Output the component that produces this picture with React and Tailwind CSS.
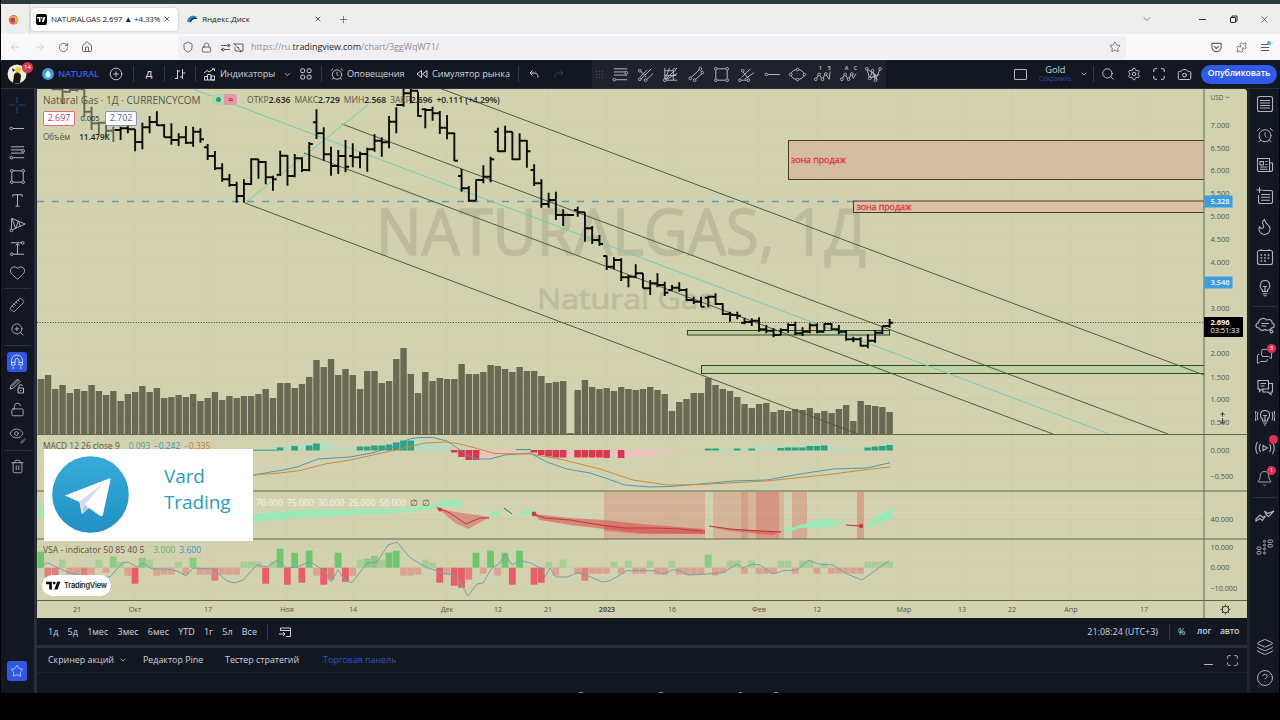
import React from 'react';
import {
  AlarmClock, ArrowLeft, ArrowRight, Bell, Brush, Camera, ChevronDown, CirclePlus, CircleHelp, Eye, Flame,
  Heart, House, Layers, Lightbulb, Lock, LockOpen, Maximize, MessageSquareText, MessagesSquare,
  Newspaper, Plus, RotateCw, Ruler, Search, Settings, Shield, Star, Trash2, X, ZoomIn, Puzzle,
} from 'lucide-react';

const FIRST_X = 40.8;
const STEP = 7.255;
const xAt = (i) => FIRST_X + STEP * i;

const volumes = [
  55, 59, 45, 49, 41, 45, 43, 49, 43, 39, 43, 33, 40, 42, 48, 42, 46, 36, 37, 39,
  37, 40, 33, 36, 42, 34, 38, 36, 38, 38, 40, 45, 36, 51, 51, 46, 50, 57, 74, 67,
  75, 59, 65, 59, 45, 63, 63, 51, 53, 75, 86, 60, 41, 62, 53, 56, 55, 55, 70, 60,
  60, 62, 69, 68, 65, 62, 67, 63, 63, 58, 51, 52, 53, 1, 44, 54, 47, 45, 46, 43,
  47, 45, 44, 45, 47, 44, 40, 23, 32, 35, 41, 41, 56, 49, 45, 43, 37, 30, 26, 30,
  31, 22, 24, 23, 25, 24, 26, 21, 23, 21, 25, 29, 13, 33, 29, 28, 27, 22,
];

// [index, high, low, close, open?] in thirds of a pixel, measured from y = 80
const bars = [
  [2, 20, 30, 28], [3, 20, 72, 35, 28], [4, 20, 38, 30], [5, 20, 35, 28], [6, 20, 110, 95], [7, 80, 150, 130], [8, 125, 162, 128], [9, 118, 170, 152],
  [10, 140, 186, 150], [11, 140, 180, 145], [12, 130, 160, 148], [13, 148, 214, 186], [14, 128, 208, 142], [15, 108, 160, 126],
  [16, 94, 138, 136], [17, 132, 172, 172], [18, 130, 194, 180], [19, 160, 198, 172], [20, 138, 192, 188], [21, 140, 200, 155],
  [22, 145, 188, 178], [23, 192, 240, 228, 202], [24, 213, 270, 265], [25, 250, 305, 298], [26, 282, 320, 315], [27, 305, 368, 348],
  [28, 298, 368, 312], [29, 235, 315, 238], [30, 237, 296, 246], [31, 243, 313, 292], [32, 287, 332, 298], [33, 212, 288, 227, 284],
  [34, 225, 317, 288], [35, 222, 292, 235], [36, 232, 276, 270], [37, 186, 274, 192], [38, 88, 177, 160, 127], [39, 142, 242, 223],
  [40, 200, 287, 258], [41, 210, 282, 228], [42, 180, 277, 260], [43, 190, 262, 232, 228], [44, 215, 265, 222], [45, 203, 275, 208],
  [46, 163, 215, 182], [47, 172, 230, 187], [48, 108, 205, 125], [49, 82, 160, 75], [50, 25, 80, 40], [51, 25, 70, 32],
  [52, 35, 110, 108], [53, 85, 145, 90, 88], [54, 80, 122, 100], [55, 93, 162, 143], [56, 105, 178, 160], [57, 158, 243, 242],
  [58, 267, 335, 325, 288], [59, 318, 366, 362], [60, 298, 362, 300], [61, 256, 310, 290], [62, 230, 307, 238], [63, 143, 215, 214, 155],
  [64, 137, 215, 155], [65, 155, 240, 238], [66, 160, 240, 182], [67, 180, 263, 214], [68, 253, 318, 310, 270], [69, 298, 383, 372],
  [70, 338, 383, 360], [71, 335, 420, 405], [72, 388, 438, 405], [73, 402, 408, 405], [74, 380, 410, 397, 390], [75, 397, 485, 445],
  [76, 438, 492, 480], [77, 465, 497, 492], [78, 527, 570, 560, 528], [79, 532, 568, 540], [80, 535, 603, 592], [81, 585, 622, 590],
  [82, 553, 595, 580], [83, 580, 625, 625], [84, 600, 645, 610], [85, 580, 622, 615], [86, 605, 648, 638], [87, 615, 632, 623, 630],
  [88, 607, 635, 630], [89, 625, 663, 660], [90, 650, 672, 665], [91, 650, 680, 680], [92, 647, 682, 650, 653], [93, 640, 675, 672],
  [94, 670, 705, 702], [95, 695, 725, 705], [96, 695, 718, 707], [97, 713, 733, 726, 728], [98, 715, 738, 722], [99, 712, 755, 748],
  [100, 735, 760, 752], [101, 745, 772, 765], [102, 745, 765, 750], [103, 730, 758, 735], [104, 725, 765, 760], [105, 742, 768, 755],
  [106, 730, 760, 736], [107, 730, 760, 755], [108, 730, 752, 732], [109, 730, 750, 748], [110, 735, 763, 755], [111, 750, 782, 778],
  [112, 770, 787, 778], [113, 772, 800, 797], [114, 763, 805, 782], [115, 750, 788, 758], [116, 737, 763, 738], [117, 717, 743, 728],
];

const macdUp = [
  [33, 3], [35, 4.5], [37, 5], [38, 7], [44, 4], [45, 4], [46, 5], [47, 5], [48, 6], [49, 8], [50, 10], [51, 10],
  [92, 2], [93, 2], [96, 2], [98, 2], [102, 2.5], [103, 3], [104, 3], [105, 3], [106, 4.5], [107, 4.5], [108, 5],
  [114, 3], [115, 4], [116, 4.5], [117, 5.5],
];
const macdDown = [
  [57, 2.5], [58, 7], [59, 10], [60, 10], [68, 2.5], [69, 5], [70, 6.5], [71, 7.5], [72, 7.5], [74, 7.5], [75, 7.5],
  [76, 7.5], [77, 7.5], [78, 8], [80, 8],
];

const vsa = {
  0: 16, 1: -10, 2: -10, 3: 8, 4: -7, 5: -7, 6: -9, 7: -7, 8: 8, 9: -5, 10: 11, 11: 6, 12: -8, 13: -16, 14: 10, 15: 8, 16: -8,
  17: -7, 18: -7, 19: 6, 20: -7, 21: 10, 22: -7, 23: -7, 24: -13, 25: -7, 26: -7, 27: -7, 28: 6, 29: 6, 30: 6, 31: -16, 32: 6, 33: 19,
  34: -17, 35: 15, 36: -15, 37: 17, 38: -8, 39: -17, 40: -12, 41: 15, 42: -14, 43: -8, 44: 8, 45: 9, 46: 12, 47: 8, 48: 15, 49: 17,
  50: -8, 51: -8, 52: -7, 53: 8, 54: 5, 55: -15, 56: -7, 57: -18, 58: -20, 59: -12, 60: 15, 61: -6, 62: 17, 63: -8, 64: 15, 65: -17,
  66: 17, 68: -17, 69: -15, 70: 6, 71: -8, 72: 8, 74: -6, 75: -13, 76: -6, 77: -6, 78: -6, 79: 6, 80: -6, 81: 7, 82: -6, 83: -6,
  84: 7, 85: -7, 86: -7, 87: 7, 88: -7, 89: -7, 90: -7, 91: -7, 92: 13, 93: -8, 94: -5, 95: 7, 96: 7, 97: -6, 98: 7, 99: -6, 100: -6,
  101: -6, 102: 7, 103: 7, 104: -6, 105: 7, 106: 7, 107: -6, 108: 5, 109: -6, 110: -6, 111: -6, 112: -6, 113: -6, 114: 6, 115: 6, 116: 6, 117: 6,
};

const vsaOpacity = (v) => (Math.abs(v) >= 14 ? 0.85 : Math.abs(v) >= 9 ? 0.6 : 0.35);

const priceLabels = [
  ['7.000', 124.7], ['6.500', 147.8], ['6.000', 170.5], ['5.500', 193.5], ['5.000', 216], ['4.500', 239.3], ['4.000', 262],
  ['3.000', 308], ['2.000', 353.5], ['1.500', 376.8], ['1.000', 399.5], ['0.500', 422],
  ['0.000', 450], ['−0.500', 476], ['40.000', 519.3], ['10.000', 546.7], ['0.000', 567.4], ['−10.000', 588.6],
];
const timeLabels = [
  ['21', 77], ['Окт', 135], ['17', 208], ['Ноя', 287], ['14', 353], ['Дек', 447], ['12', 498], ['21', 548], ['2023', 607],
  ['16', 672], ['Фев', 759], ['12', 817], ['Мар', 904], ['13', 962], ['22', 1012], ['Апр', 1071], ['17', 1144],
];

function Bars() {
  let prev = null;
  const d = bars.map(([i, h, l, c, o]) => {
    const x = xAt(i);
    const open = o ?? prev ?? c;
    prev = c;
    const y = (v) => (80 + v / 3).toFixed(1);
    return `M${x} ${y(h)}V${y(l)}M${x - 3.6} ${y(open)}H${x}M${x} ${y(c)}H${x + 3.6}`;
  }).join('');
  return <path d={d} stroke="#0b0b08" strokeWidth="1.9" fill="none" />;
}

function Chart() {
  return (
    <svg viewBox="37 89 1210 529" className="block h-[529px] w-[1210px]" fontFamily='"Open Sans", "Noto Sans", sans-serif'>
      <defs>
        <clipPath id="main"><rect x="37" y="89" width="1167" height="345" /></clipPath>
      </defs>
      <rect x="37" y="89" width="1210" height="529" fill="#d3d2b0" />
      <g stroke="#cbcaa8" strokeWidth="1" opacity=".4">
        {timeLabels.map(([, x]) => <path key={x} d={`M${x} 89V600`} />)}
        {priceLabels.map(([, y]) => <path key={y} d={`M37 ${y}H1204`} />)}
      </g>

      <g fill="#8c8b74" stroke="#8c8b74" opacity=".3">
        <text x="376" y="255" fontSize="64" strokeWidth="1.6" textLength="490" lengthAdjust="spacingAndGlyphs">NATURALGAS, 1Д</text>
        <text x="537" y="309" fontSize="27" strokeWidth=".8" textLength="177" lengthAdjust="spacingAndGlyphs">Natural Gas</text>
      </g>

      {volumes.map((h, i) => (
        <rect key={i} x={Math.max(37, xAt(i) - 3.2)} y={434 - h} width={i ? 6.4 : 6.9} height={h} fill="#6a6953" />
      ))}

      <g clipPath="url(#main)">
        <rect x="788.5" y="140.5" width="420" height="39" fill="#d4bda2" stroke="#4a3a2c" />
        <rect x="853.5" y="201" width="360" height="11.5" fill="#d8c1a8" stroke="#4a3a2c" />
        <rect x="687.5" y="330.5" width="202" height="4.5" fill="#b9cf9f" stroke="#2f4526" />
        <rect x="701.5" y="365.5" width="510" height="8" fill="#c0d3a6" stroke="#2f4526" />
        <path d="M37 201.5H853" stroke="#5b9cba" strokeWidth="1.6" strokeDasharray="7 8" />
        <path d="M37 322.5H1204" stroke="#3b3b30" strokeDasharray="1 1.6" />
        <g stroke="#4a5c40" fill="none">
          <path d="M440 88.3L1204 375" />
          <path d="M342 124L1168 434" />
          <path d="M304 153L1053 434" />
          <path d="M245 203L858 434" />
        </g>
        <g stroke="#6fcdb0" fill="none">
          <path d="M193 89L1109 434" />
          <path d="M245 203L368 105" />
        </g>
        <Bars />
      </g>
      <g fill="#dd3c40" fontSize="9" stroke="#dd3c40" strokeWidth=".3">
        <text x="791" y="163" textLength="55">зона продаж</text>
        <text x="856.5" y="209.5" textLength="55">зона продаж</text>
      </g>

      {/* MACD */}
      <path d="M253 450L283 447L320 442L345 448L360 449L393 444L412 440L452 447V450Z" fill="#a9e0c8" opacity=".75" />
      <path d="M452 450L467 459L490 459L505 453L535 451V449Z" fill="#f0c0c0" opacity=".8" />
      <path d="M545 450H690L626 458L580 458L550 455Z" fill="#f3bfc6" opacity=".85" />
      <path d="M690 450L760 447L820 444L850 449L893 444V450Z" fill="#a9e0c8" opacity=".7" />
      {macdUp.map(([i, h]) => <rect key={i} x={xAt(i) - 3.4} y={450.5 - h} width="6.6" height={h} fill="#2fa283" />)}
      {macdDown.map(([i, h]) => <rect key={i} x={xAt(i) - 3.4} y="450" width="6.6" height={h} fill="#d8384f" />)}
      <path d="M253 450.2H277M516 449.6H531" stroke="#2fa283" />
      <polyline fill="none" stroke="#4f97b5" points="240,478 253,475 283,470 297,467 318,459 350,457 373,452.7 393,446.7 410,438.7 420,437.5 433,437.5 447,441 467,455 477,459 490,459 505,455 530,453 547,462 567,469 590,473 605,478 625,485 650,487 670,486.5 700,484 733,481 767,480 800,474 833,469 867,468 890,462.7" />
      <polyline fill="none" stroke="#cb8a3e" points="240,477 253,475 280,473 300,470.5 325,464 350,460 400,449 425,443 447,442 460,444 475,448 495,453.5 530,454 560,459 600,469 633,480 667,485 700,484.5 767,481 800,477.5 833,474 867,469.5 890,467" />

      {/* RSI */}
      <path d="M37 502.5H1204M37 513H1204" stroke="#dcdcbf" opacity=".7" />
      <g fill="#d66a5c">
        <rect x="604" y="492" width="101" height="47" opacity=".3" />
        <rect x="713" y="492" width="71" height="47" opacity=".28" />
        <rect x="741" y="492" width="7" height="47" opacity=".3" />
        <rect x="756" y="492" width="23" height="47" opacity=".4" />
        <rect x="792" y="492" width="15" height="47" opacity=".35" />
        <rect x="857" y="492" width="7" height="47" opacity=".45" />
      </g>
      <path d="M253 514L300 510L400 509L440 504L438 508L400 513L300 518L253 522Z" fill="#9ce8b6" />
      <path d="M37 500L45 505V520L37 515Z" fill="#a8e3b2" />
      <path d="M435 506L450 511L490 517L468 529L455 523Z" fill="#d96a60" opacity=".6" />
      <path d="M533 514L570 518L604 520L640 524L705 529V534L640 533L570 525L540 520Z" fill="#d9504d" opacity=".6" />
      <path d="M604 526L640 529L705 531V534L640 534L604 531Z" fill="#d9504d" opacity=".45" />
      <path d="M710 527L750 530L782 531L773 535L730 531Z" fill="#d9504d" opacity=".55" />
      <path d="M437 508L450 513L466 524L480 518L489 518M533 514L545 518L570 520L600 525L625 528L655 528L680 529L703 531M709 526L730 529L760 531L781 532M846 525L861 526" stroke="#b9363b" fill="none" />
      <path d="M504 508L512 514" stroke="#4d5a3e" />
      <circle cx="440" cy="509.5" r="2" fill="#cc3b3f" />
      <circle cx="534" cy="514" r="2.4" fill="#cc3b3f" />
      <circle cx="861" cy="526" r="2.2" fill="#cc3b3f" />
      <path d="M784 530L800 525L825 519L846 523L825 527L800 528L786 533ZM866 527L878 516L893 508L891 519L878 523L866 528ZM492 511L500 510L498 517L492 517ZM517 513L531 509V515ZM437 501L462 500V506L440 506Z" fill="#93ecb9" />

      {/* VSA */}
      {Object.entries(vsa).map(([i, v]) => (
        <rect
          key={i}
          x={xAt(Number(i)) - 3.5}
          y={v > 0 ? 567.7 - v : 567.7}
          width="6.8"
          height={Math.abs(v)}
          fill={v > 0 ? '#5cc463' : '#ea4a5c'}
          opacity={vsaOpacity(v)}
        />
      ))}
      <polyline fill="none" stroke="#72a3a8" points="38,568 43,565 48,562.7 56,567 70,573 90,577 110,577 122,563 128,562 137,567 143,563 152,569 167,569 177,571 186,576 193,568 213,569 227,581 235,583 243,580 257,565 267,567 277,560 287,568 297,567 307,563 312,562.7 325,571.7 331,582 338,570 345,580.7 352,582.7 367,563 377,562 388,545 397,542 410,557.7 427,567.7 447,574 457,576.7 468,596 477,584 483,583 492,568 499,564 505,554 512,565 520,560.7 530,562.7 542,569 545,576.7 550,568 556,577 567,577 578,572.7 590,576.7 602,582 610,580.7 617,576.7 627,570.7 655,570.7 663,574 672,570 678,570 688,575 700,574.5 723,572.7 737,564 743,568 753,564 760,565 773,574 783,570.7 797,570 809,560 818,564 833,565 847,574 862,580 889,560.7" />

      {/* pane borders and scales */}
      <path d="M37 434.5H1247M37 491H1247M37 539H1247M37 600.5H1247M1204 89V618" stroke="#63624d" fill="none" />
      <g fill="#55543f" fontSize="7.8">
        <text x="1210.5" y="100" textLength="13" lengthAdjust="spacingAndGlyphs">USD</text>
        {priceLabels.map(([t, y]) => (
          <text key={y} x={1210.5} y={y + 2.8} textLength={t.length * 3.8} lengthAdjust="spacingAndGlyphs">{t}</text>
        ))}
        {timeLabels.map(([t, x]) => (
          <text key={x} x={x} y="612" textAnchor="middle" fontSize="7.2" fontWeight={t === '2023' ? 700 : 400}>{t}</text>
        ))}
      </g>
      <path d="M1226 96.5l1.6 1.6 1.6-1.6" stroke="#5d5c4a" fill="none" />
      <rect x="1204.5" y="195.500" width="28" height="12" fill="#3a9de0" />
      <rect x="1204.5" y="276.500" width="28" height="12" fill="#3a9de0" />
      <rect x="1204" y="317" width="39" height="20" fill="#020202" />
      <g fill="#f3f7fa" fontSize="7.600" fontWeight="600">
        <text x="1210.5" y="204.300" textLength="19">5.328</text>
        <text x="1210.5" y="285.300" textLength="19">3.546</text>
        <text x="1210.5" y="325" textLength="19" fontWeight="700">2.696</text>
        <text x="1210.5" y="333.400" textLength="29" fontWeight="400">03:51:33</text>
      </g>
      <g stroke="#33322a" fill="none">
        <circle cx="1225.5" cy="609.5" r="3.3" />
        <path d="M1225.5 604.6v1.6M1225.5 612.8v1.6M1220.6 609.5h1.6M1228.8 609.5h1.6M1222 606l1 1M1229 606l-1 1M1222 613l1-1M1229 613l-1-1" />
        <path d="M1222.5 413v10M1220.5 415l2-2.5 2 2.5M1220.5 421.5l2 2.5 2-2.5" strokeWidth=".9" />
        <path d="M1221 417.5h3.5" stroke="#fff" />
      </g>
    </svg>
  );
}

/* drawing tools, 20x20 grid, nodes are the little round handles */
const tools = {
  trend: { d: 'M5 10H17', n: [[3.5, 10]] },
  fib: { d: 'M3 4H17M3 7.3H15M3 10.6H17M5 15.5H17', n: [[16, 8.2], [3.5, 15.5]] },
  rect: { d: 'M5.5 4H14.5M5.5 16H14.5M4 5.5V14.5M16 5.5V14.5', n: [[4, 4], [16, 4], [4, 16], [16, 16]] },
  text: { d: 'M5 6V4H15V6M10 4V16M8 16H12' },
  pattern: { d: 'M3.500 16L4 3.500L18 9.500L3.500 16M4 3.500L8 14L11 6.500L13 12', n: [[3.5, 16.200]] },
  forecast: { d: 'M3 4H15M5 16H17M10 5V16M8 7l2-2 2 2', n: [[15.5, 4], [4, 16]] },
  pitchfork: { d: 'M4.500 12.500L12 5M5 15L9 11L16 4M11 15.500L18 9M5 6.500L11 13', n: [[4, 6], [4, 15], [10, 16]] },
  gann: { d: 'M4 3V16H17M4 16L17 3M4 16L9 3M4 16L17 9M4 6H13V16M4 11H16', n: [[4, 16], [14, 5]] },
  channel: { d: 'M4.5 13L13 5M9 15L16 9', n: [[3.5, 14], [14, 4], [8, 16], [16, 8]] },
  schiff: { d: 'M5 13L14 4M8 15L18 8M3 16H13M6 7L12 14', n: [[6, 6], [3, 16], [12, 16]] },
  ray: { d: 'M5 10H18', n: [[3.5, 10]] },
  ellipse: { d: 'M3 10C4 3 16 3 17 10C16 17 4 17 3 10', n: [[2.8, 10], [17.2, 10], [10, 4.7], [10, 15.3]] },
  wave5: { d: 'M3 15L6 10L10 15L13 9L17 15L18 7', n: [[3, 15], [6.5, 10], [10, 15], [13.5, 9.5]], label: ['1', '5'] },
  waveC: { d: 'M3 15L6 10L10 15L13 9L15 14L18 9', n: [[3, 15], [6.5, 10], [10, 15], [13.5, 9.5]], label: ['A', 'C'] },
  heads: { d: 'M3 4L6 14L9 6L12 16L17 4M3 4L13 11L6 14L16 10M9 6L14 16', n: [[3, 4], [6, 14], [12, 16], [17, 4], [9, 6]] },
};

function Tool({ name, size = 19 }) {
  const { d, n = [], label } = tools[name];
  return (
    <svg viewBox="0 0 20 20" width={size} height={size} fill="none" stroke="currentColor" strokeWidth="1.05">
      <path d={d} />
      {n.map(([x, y], k) => <circle key={k} cx={x} cy={y} r="1.4" fill="#131722" />)}
      {label && (
        <g fontSize="5.5" fill="currentColor" stroke="none" fontFamily="Open Sans, sans-serif" fontWeight="700">
          <text x="6" y="5">{label[0]}</text>
          <text x="15.500" y="5">{label[1]}</text>
        </g>
      )}
    </svg>
  );
}

const Sep = ({ className = '' }) => <div className={`h-4 w-px shrink-0 bg-[#363a45] ${className}`} />;

function BrowserChrome() {
  return (
    <>
      <div className="h-1 bg-[#2d3c41]" />
      <div className="flex h-[30px] items-center bg-[#eeeeee] text-[8px] text-[#1b1b20]">
        <div className="flex h-full w-[29px] items-center justify-center border-r border-[#d3d3d6] pr-1">
          <svg width="11" height="11" viewBox="0 0 12 12">
            <circle cx="6" cy="6.3" r="5.2" fill="#f0643c" />
            <path d="M1 5C2 2 4 1 5 2C7 3 9 1 10 3C12 6 11 10 7 11.3C9 8 7 5 1 5Z" fill="#f5a83c" />
            <circle cx="5.2" cy="6.6" r="2.4" fill="#8b3fa8" />
          </svg>
        </div>
        <div className="ml-px flex h-[23px] w-[147px] items-center rounded-sm bg-white shadow-[0_0_2px_#a5a5ad]">
          <div className="ml-[5px] flex h-[11px] w-[11px] items-center justify-center rounded-[2px] bg-black">
            <svg width="9" height="7" viewBox="0 0 18 12" fill="#fff"><path d="M0 1H7V11H4V4H0Z" /><circle cx="9.6" cy="2.6" r="1.7" /><path d="M13 1H17L13.5 11H9.5Z" /></svg>
          </div>
          <span className="ml-[4px] w-[112px] whitespace-nowrap tracking-[-0.12px]">NATURALGAS 2.697 ▲ +4.33% <span className="text-[#c5c5c8]">C</span></span>
          <X size={8} strokeWidth={2} />
        </div>
        <svg className="ml-[9px]" width="11" height="11" viewBox="0 0 12 12"><path d="M.500 8.500C0 3 6 0 11.500 3C7 3 5 6 4 9Z" fill="#2787cf" /><path d="M3 8C5 4 8 2.500 11.500 4.500L10 5.500C7 5 6 6 4 9Z" fill="#18304f" /></svg>
        <span className="ml-[4px] w-[112px]">Яндекс.Диск</span>
        <X size={8} strokeWidth={2} />
        <Plus size={11} strokeWidth={1.6} className="ml-[16px] text-[#55555c]" />
        <ChevronDown size={12} strokeWidth={1.6} className="ml-auto mr-[46px] text-[#55555c]" />
        <div className="mr-[23px] h-px w-[7px] bg-[#333]" />
        <svg width="9" height="9" viewBox="0 0 9 9" fill="none" stroke="#222"><rect x="1.5" y="2.5" width="5" height="5" rx=".5" /><path d="M3 2.3V1H8V6H6.7" /></svg>
        <X size={11} strokeWidth={1.5} className="ml-[21px] mr-[10px] text-[#333]" />
      </div>
      <div className="flex h-[26px] items-center bg-[#f9f9fb] text-[#5b5b66]">
        <ArrowLeft size={12} strokeWidth={1.6} className="ml-[8px] text-[#c4c4c9]" />
        <ArrowRight size={12} strokeWidth={1.6} className="ml-[13px] text-[#c4c4c9]" />
        <RotateCw size={11} strokeWidth={1.9} className="ml-[12px]" />
        <House size={12} strokeWidth={1.9} className="ml-[12px]" />
        <div className="ml-[85px] flex h-[23px] w-[948px] items-center rounded-sm bg-[#f0f0f4]">
          <Shield size={12} strokeWidth={1.8} className="ml-[4px]" />
          <Lock size={11} strokeWidth={1.9} className="ml-[7px]" />
          <svg className="ml-[8px]" width="24" height="11" viewBox="0 0 24 11" fill="none" stroke="currentColor">
            <path d="M1 3.5H7M4 7.5H10M3 7.5H1M8 3.5H10" /><circle cx="8.5" cy="3.5" r="1.3" /><circle cx="3" cy="7.5" r="1.3" />
            <path d="M14 2H23V9H21V10L18.5 9H15V5M13.5 1L22 10M17 5.5H19" />
          </svg>
          <span className="ml-[7px] text-[9px] tracking-[-0.06px] text-[#8f8f9a]">https://ru.<span className="text-[#1f1f25]">tradingview.com</span>/chart/3ggWqW71/</span>
          <Star size={12} strokeWidth={1.7} className="ml-auto mr-[5px]" />
        </div>
        <svg className="ml-auto" width="11" height="11" viewBox="0 0 12 12" fill="none" stroke="currentColor" strokeWidth="1.2"><path d="M1 1.5H11V5.5A5 5 0 0 1 1 5.500ZM3.5 4.5L6 7L8.5 4.5" /></svg>
        <Puzzle size={11} strokeWidth={1.9} className="ml-[14px]" />
        <div className="relative ml-[14px] mr-[11px] flex w-[8px] flex-col gap-0.5">
          <i className="h-px w-full bg-[#5b5b66]" /><i className="h-px w-full bg-[#5b5b66]" /><i className="h-px w-full bg-[#5b5b66]" />
          <b className="absolute -top-[3px] left-[6px] h-1 w-1 rounded-full bg-[#3cc7a0]" />
        </div>
      </div>
    </>
  );
}

const favourites = ['fib', 'pitchfork', 'gann', 'channel', 'rect', 'schiff', 'ray', 'ellipse', 'wave5', 'waveC', 'heads'];

function TopBar() {
  return (
    <div className="flex h-[28px] items-center whitespace-nowrap bg-[#131722] text-[9.1px] font-medium text-[#d1d4dc]">
      <div className="relative flex w-[32px] shrink-0 justify-center">
        <svg width="20" height="20" viewBox="0 0 20 20"><circle cx="10" cy="10" r="9.5" fill="#f2efd6" /><circle cx="11" cy="6" r="3" fill="#e3d54c" /><path d="M6 19L7 11C8 7 14 8 14 12L13 19ZM5 4L8 6L6 8Z" fill="#16160f" /></svg>
        <span className="absolute -top-[2px] right-0 flex h-[11px] w-[11px] items-center justify-center rounded-full bg-[#d8334f] text-[6px] text-white">14</span>
      </div>
      <div className="ml-[5px] flex w-5 justify-center">
        <svg width="12" height="12" viewBox="0 0 12 12"><circle cx="6" cy="6" r="6" fill="#3f9fd8" /><path d="M6 2.2C8 4.8 8.6 5.8 8.6 7A2.6 2.6 0 0 1 3.4 7C3.4 5.8 4 4.8 6 2.2Z" fill="#e6f4fb" /></svg>
      </div>
      <span className="w-[41px] text-[9.2px] font-semibold tracking-[-0.2px] text-[#2f5fe6]">NATURAL</span>
      <div className="flex w-[34px] justify-center"><CirclePlus size={14} strokeWidth={1.5} /></div>
      <Sep />
      <span className="w-[30px] text-center font-semibold">Д</span>
      <Sep />
      <div className="flex w-[30px] justify-center">
        <svg width="12" height="12" viewBox="0 0 12 12" fill="none" stroke="currentColor"><path d="M3.5 2V11M1 10.5H3.5M3.5 3H6M8.5 1V11M8.5 5H11.5M6 9H8.5" /></svg>
      </div>
      <Sep />
      <div className="ml-[3px] flex w-[21px] justify-center">
        <svg width="13" height="13" viewBox="0 0 13 13" fill="none" stroke="currentColor"><path d="M1 5L4 2.5L6 4L11 .8M9 .8H11.5V3M1.5 12V8.5H4.5V12M4.5 12V6.5H8V12M8 12V8H11.5V12ZM1 12H12" /></svg>
      </div>
      <span className="w-[57px] tracking-[-0.05px]">Индикаторы</span>
      <div className="flex w-5 justify-center"><ChevronDown size={9} strokeWidth={2} /></div>
      <div className="flex w-[18px] justify-center">
        <svg width="12" height="12" viewBox="0 0 12 12" fill="none" stroke="currentColor"><rect x=".8" y=".8" width="3.8" height="3.8" rx="1" /><rect x="7.2" y=".8" width="3.8" height="3.8" rx="1" /><rect x=".8" y="7.2" width="3.8" height="3.8" rx="1" /><rect x="7.2" y="7.2" width="3.8" height="3.8" rx="1" /></svg>
      </div>
      <Sep className="ml-[6px]" />
      <div className="ml-[5px] flex w-5 justify-center"><AlarmClock size={14} strokeWidth={1.5} /></div>
      <span className="w-[57px] tracking-[-0.1px]">Оповещения</span>
      <div className="ml-2 flex w-5 justify-center">
        <svg width="12" height="10" viewBox="0 0 12 10" fill="none" stroke="currentColor"><path d="M5.5 1.5V8.5L1 5ZM11 1.5V8.5L6.5 5Z" /></svg>
      </div>
      <span className="w-[77px] tracking-[-0.05px]">Симулятор рынка</span>
      <Sep className="ml-[9px]" />
      <div className="flex w-[30px] justify-center"><svg width="10" height="8" viewBox="0 0 10 8" fill="none" stroke="currentColor"><path d="M3.5 .5L1 3L3.5 5.5M1 3H6C8 3 9 4.5 9 7.5" /></svg></div>
      <div className="flex w-5 justify-center text-[#3a3e49]"><svg width="10" height="8" viewBox="0 0 10 8" fill="none" stroke="currentColor"><path d="M6.5 .5L9 3L6.5 5.500M9 3H4C2 3 1 4.5 1 7.5" /></svg></div>
      <div className="ml-[23px] flex h-full w-[294px] items-center bg-[#1e222d] text-[#b2b5be]">
        <div className="grid w-4 grid-cols-3 gap-[2px] px-1">
          {[...Array(9)].map((_, k) => <i key={k} className="h-px w-px bg-[#50535e]" />)}
        </div>
        {favourites.map((name) => (
          <div key={name} className="flex w-[25.3px] shrink-0 justify-center"><Tool name={name} size={19} /></div>
        ))}
      </div>
      <div className="ml-auto flex w-5 justify-center"><div className="h-[11px] w-[13px] rounded-[1px] border border-[#b2b5be]" /></div>
      <div className="ml-[5px] flex w-[39px] flex-col items-center">
        <span className="text-[9.2px] leading-[10px]">Gold</span>
        <span className="text-[6.2px] leading-[8px] text-[#2a4cb0]">Сохранить</span>
      </div>
      <div className="ml-[2px] flex w-[14px] justify-center"><ChevronDown size={8} strokeWidth={2} /></div>
      <Sep className="ml-[2px] mr-[2px]" />
      <div className="flex w-[25.3px] justify-center"><Search size={14} strokeWidth={1.5} /></div>
      <div className="flex w-[25.3px] justify-center"><Settings size={14} strokeWidth={1.5} /></div>
      <div className="flex w-[25.3px] justify-center"><Maximize size={14} strokeWidth={1.7} /></div>
      <div className="flex w-[25.3px] justify-center"><Camera size={15} strokeWidth={1.5} /></div>
      <button className="ml-1 mr-[3px] h-[19px] w-[76px] rounded-full bg-[#2f5be8] text-[8.7px] font-semibold tracking-[-0.1px] text-white">Опубликовать</button>
    </div>
  );
}

const Slot = ({ children }) => <div className="flex h-6 items-center justify-center">{children}</div>;
const Rule = () => <div className="flex h-[8.7px] items-center"><div className="mx-auto h-px w-[27px] bg-[#2e323d]" /></div>;

function LeftBar() {
  return (
    <div className="flex w-[36px] shrink-0 flex-col border-r-[3px] border-[#2a2e39] bg-[#131722] pb-[7px] pr-[1px] pt-[3.500px] text-[#b2b5be]">
      <Slot>
        <svg width="16" height="16" viewBox="0 0 16 16" stroke="#243f8f" strokeWidth="1.1"><path d="M8 0V6.5M8 9.5V16M0 8H6.5M9.5 8H16" /></svg>
      </Slot>
      {['trend', 'fib', 'rect', 'text', 'pattern', 'forecast'].map((name) => <Slot key={name}><Tool name={name} /></Slot>)}
      <Slot><Heart size={17} strokeWidth={1.3} /></Slot>
      <Rule />
      <Slot><Ruler size={16} strokeWidth={1.3} className="-scale-x-100" /></Slot>
      <Slot><ZoomIn size={15} strokeWidth={1.4} /></Slot>
      <Rule />
      <Slot>
        <div className="flex h-5 w-5 items-center justify-center rounded-[3px] bg-[#3058e0]">
          <svg width="14" height="16" viewBox="0 0 14 16" fill="none" stroke="#c9d6fb"><path d="M1.5 11V6.5A5.5 5.5 0 0 1 12.5 6.5V11H9V6.5A2 2 0 0 0 5 6.5V11ZM1.5 8.5H5M9 8.5H12.5M3.2 12.5V15M10.8 12.5V15" /></svg>
        </div>
      </Slot>
      <Slot>
        <svg width="16" height="16" viewBox="0 0 16 16" fill="none" stroke="currentColor"><path d="M1 11L2 7.5L8.5 1L11 3.5L4.5 10L1 11ZM3 8.5L9.5 2M9 10H14.5V15H9ZM10 10V8A1.8 1.8 0 0 1 13.5 8M11.8 12V13.2" /></svg>
      </Slot>
      <Slot><LockOpen size={15} strokeWidth={1.4} /></Slot>
      <Slot>
        <div className="flex items-end">
          <Eye size={15} strokeWidth={1.4} />
          <Brush size={6} strokeWidth={2} className="-ml-1 -mb-[3px]" />
        </div>
      </Slot>
      <Rule />
      <Slot><Trash2 size={15} strokeWidth={1.4} /></Slot>
      <div className="mx-auto mt-auto mb-[5px] flex h-5 w-5 items-center justify-center rounded-[3px] bg-[#3058e0]">
        <Star size={14} strokeWidth={1.4} className="text-[#c9d6fb]" />
      </div>
    </div>
  );
}

function SideItem({ children, badge }) {
  return (
    <div className="flex h-[30.6px] shrink-0 items-center justify-center">
      <div className="relative">
        {children}
        {badge !== undefined && (
          <span className="absolute -right-[3px] -top-[4px] flex h-[9px] w-[9px] items-center justify-center rounded-full bg-[#e0305a] text-[6px] text-white">{badge}</span>
        )}
      </div>
    </div>
  );
}

function RightBar() {
  const s = { width: 18, height: 18, viewBox: '0 0 18 18', fill: 'none', stroke: 'currentColor', strokeWidth: 1.1 };
  return (
    <div className="flex w-[33px] shrink-0 flex-col border-l-[3px] border-r border-l-[#20242e] border-r-black bg-[#131722] text-[#b2b5be]">
      <SideItem><svg {...s}><rect x="1.5" y="1.5" width="15" height="15" rx="2" /><path d="M4 5.5H14M4 8H14M4 10.5H14M4 13H14" /></svg></SideItem>
      <SideItem><AlarmClock size={18} strokeWidth={1.3} /></SideItem>
      <SideItem><svg {...s}><path d="M1.500 2.500H13.500V15.500H3A1.500 1.500 0 0 1 1.500 14ZM13.500 7H16.500V14A1.500 1.500 0 0 1 13.500 14M4 5.500H7.500V9H4ZM9.500 5.500H11.500M9.500 8.500H11.500M4 11H11.500M4 13.200H11.500" /></svg></SideItem>
      <SideItem><svg {...s}><path d="M7 3.5H15A1.5 1.5 0 0 1 16.5 5V14.5A2 2 0 0 1 14.5 16.5H4.5A2 2 0 0 1 2.5 14.5V8M3.5 0V6M.5 3H6.5M5 7.5H14M5 10.3H14M5 13.2H14" /></svg></SideItem>
      <SideItem><Flame size={19} strokeWidth={1.3} /></SideItem>
      <SideItem>
        <svg {...s}><rect x="1.5" y="2.5" width="15" height="14" rx="2" /><path d="M5 1V3M13 1V3" /><path d="M4.5 7H14M4.5 10H14M4.5 13H11" strokeWidth="1.7" strokeDasharray="1.7 1.9" /></svg>
      </SideItem>
      <SideItem><svg {...s}><path d="M6.500 12.500V11C3 8.500 3.500 1.500 9 1.500S15 8.500 11.500 11V12.500ZM6.500 14.800H11.500M7.500 16.800H10.500M7 7.500H11M9 7.500V12.500" /></svg></SideItem>
      <div className="mx-auto my-[3px] h-px w-[24px] shrink-0 bg-[#2e323d]" />
      <SideItem><svg {...s} width="20" height="18" viewBox="0 0 20 18"><path d="M4 12C0 12 0 7 3.5 7C3.5 2.5 9 1 11.5 4C15 2.5 17.5 4.5 17 7C20.5 8 19.5 12 16.5 12C15 15 11.5 14.5 10 13.5C8 15 5 14.5 4 12ZM6.5 7.5H14M6.5 10H11.5" /><circle cx="16.5" cy="15.5" r="1.4" /></svg></SideItem>
      <SideItem badge="3"><MessagesSquare size={17} strokeWidth={1.4} className="-scale-x-100" /></SideItem>
      <SideItem><svg {...s}><path d="M2 2.500H12.500V11H6L3.500 13.500V11H2ZM12.500 5.500H16.500V14H15V16.500L12 14H7V11M4.500 5.500H10M4.500 8H8.500" /></svg></SideItem>
      <SideItem>
        <svg {...s} width="20" viewBox="0 0 20 18"><path d="M7.5 13V11C4.5 9 4.5 2.5 10 2.5S15.5 9 12.5 11V13ZM8 15H12M9 17H11M8 7.500H12M10 7.500V13M3 4Q1.5 8 3 12M1 3Q-1 8 1 13M17 4Q18.5 8 17 12M19 3Q21 8 19 13" /></svg>
      </SideItem>
      <SideItem badge="">
        <svg {...s} width="20" viewBox="0 0 20 18"><path d="M8 6.5V11.5L12.5 9ZM5.5 5Q3 9 5.5 13M2.5 3Q-1 9 2.5 15M14.5 5Q17 9 14.5 13M17.5 3Q21 9 17.5 15" /></svg>
      </SideItem>
      <SideItem badge="1"><Bell size={17} strokeWidth={1.3} /></SideItem>
      <div className="mx-auto my-[3px] h-px w-[24px] shrink-0 bg-[#2e323d]" />
      <SideItem><svg {...s} width="20" viewBox="0 0 20 18"><path d="M1 12L5 8L8 10.500L10.500 9L7.500 13.500L5 11.500L1 14ZM9.500 4L12.500 6.500L19 4L13.500 9.500L11.500 8Z" /></svg></SideItem>
      <SideItem>
        <svg {...s} strokeWidth=".9"><rect x="1" y="9" width="4" height="2.6" rx="1" /><rect x="1" y="13.5" width="4" height="2.6" rx="1" /><rect x="12" y="2" width="4.5" height="2.6" rx="1" /><rect x="12" y="6.5" width="4.5" height="2.6" rx="1" /><circle cx="8.5" cy="3.3" r="1" /><circle cx="8.5" cy="7.2" r="1" /><circle cx="8.5" cy="11" r="1" /><circle cx="8.5" cy="15" r="1" /></svg>
      </SideItem>
      <div className="mt-auto">
        <SideItem><Layers size={18} strokeWidth={1.3} /></SideItem>
        <SideItem><CircleHelp size={18} strokeWidth={1.3} /></SideItem>
      </div>
    </div>
  );
}

function Legends() {
  return (
    <div className="pointer-events-none whitespace-nowrap leading-none text-[#55543f]">
      <div className="absolute left-1 top-0 h-[55px] w-[74px] bg-[#d3d2b0]/45" />
      <div className="absolute left-[6px] top-[6px] text-[10px] tracking-[0.01px]">Natural Gas · 1Д · CURRENCYCOM</div>
      <div className="absolute left-[175px] top-[5px] flex h-[11px] w-[25px] overflow-hidden rounded-[3px] text-[9px]">
        <span className="flex w-3 items-center justify-center bg-[#b5d6b0]"><i className="h-[5px] w-[5px] rounded-full bg-[#1fa47c]" /></span>
        <span className="flex w-[13px] items-center justify-center bg-[#e29aa8] font-bold text-[#c22b56]">≈</span>
      </div>
      <div className="absolute left-[210px] top-[7px] flex gap-[4px] text-[8.6px] tracking-[-0.05px]">
        <span>ОТКР<b className="font-semibold text-[#222218]">2.636</b></span>
        <span>МАКС<b className="font-semibold text-[#222218]">2.729</b></span>
        <span>МИН<b className="font-semibold text-[#222218]">2.568</b></span>
        <span>ЗАКР<b className="font-semibold text-[#222218]">2.696</b></span>
        <b className="font-semibold text-[#222218]">+0.111 (+4.29%)</b>
      </div>
      <div className="absolute left-[6px] top-[22px] flex items-center text-[8.8px]">
        <span className="flex h-[15px] w-[32px] items-center justify-center rounded-[2px] border border-[#dc6d85] bg-white text-[#c2305c]">2.697</span>
        <span className="w-[30px] text-center text-[7.4px] text-[#222218]">0.005</span>
        <span className="flex h-[15px] w-[32px] items-center justify-center rounded-[2px] border border-[#7d96c9] bg-white text-[#4863a8]">2.702</span>
      </div>
      <div className="absolute left-[6px] top-[44px] flex gap-[9px] text-[8.1px]">
        <span>Объём</span><b className="font-semibold text-[#222218]">11.479K</b>
      </div>
      <div className="absolute left-[6px] top-[353px] flex gap-[4px] text-[8.4px]">
        <span className="mr-[5px]">MACD 12 26 close 9</span>
        <span className="text-[#4aa58c]">0.093</span>
        <span className="text-[#3f87c0]">−0.242</span>
        <span className="text-[#d0762c]">−0.335</span>
      </div>
      <div className="absolute left-[219px] top-[410px] flex gap-[4px] text-[8.6px] text-[#f4f4e6]">
        <span>70.000</span><span>75.000</span><span>30.000</span><span>25.000</span><span>50.000</span>
        <span className="text-[#45543a]">∅</span><span className="text-[#45543a]">∅</span>
      </div>
      <div className="absolute left-[6px] top-[457px] flex gap-[4px] text-[8.6px]">
        <span className="mr-[5px]">VSA - indicator 50 85 40 5</span>
        <span className="text-[#55b562]">3.000</span>
        <span className="text-[#4793c4]">3.600</span>
      </div>
      <div className="absolute left-[5px] top-[486px] flex h-[21px] w-[69px] items-center rounded-full bg-white text-[7.4px] font-semibold text-[#1b1b20]">
        <svg className="ml-[4px] mr-[3px] shrink-0" width="15" height="9" viewBox="0 0 18 11" fill="#050505"><path d="M0 1H7V10.5H3.8V4H0Z" /><circle cx="9.8" cy="2.5" r="1.7" /><path d="M13.5 1H17.5L13.8 10.5H10Z" /></svg>
        <span className="font-[Inter] tracking-[-0.2px]">TradingView</span>
      </div>
      <div className="absolute left-[7px] top-[360px] flex h-[92px] w-[209px] bg-white">
        <svg className="ml-[8px] mt-[7px] shrink-0" width="77" height="77" viewBox="0 0 77 77">
          <defs><linearGradient id="tg" x1="0" y1="0" x2="0" y2="1"><stop offset="0" stopColor="#36abd8" /><stop offset="1" stopColor="#2190c4" /></linearGradient></defs>
          <circle cx="38.5" cy="38.5" r="38.3" fill="url(#tg)" />
          <path d="M13 39.5L57 22.5Q59 22 58.5 24L51 58.5Q50 61.5 47.5 59.5L37 52L30 58L27.5 46Z" fill="#fff" />
          <path d="M27.5 45.5L53 26L32.5 48.5L29.5 58Z" fill="#d3dcea" />
          <path d="M32.5 48.5L37 52L29.5 58Z" fill="#b5c7dc" />
        </svg>
        <div className="ml-[35px] mt-[13.500px] text-[19px] leading-[26.500px] tracking-[-0.1px] text-[#2b9cb9]">Vard<br />Trading</div>
      </div>
    </div>
  );
}

const ranges = ['1д', '5д', '1мес', '3мес', '6мес', 'YTD', '1г', '5л', 'Все'];

export default function App() {
  return (
    <div className="h-[720px] w-[1280px] overflow-hidden bg-black font-['Open_Sans','Noto_Sans',sans-serif]">
      <div className="flex h-[693px] flex-col border-l border-black">
        <BrowserChrome />
        <TopBar />
        <div className="h-px shrink-0 bg-[#2a2e39]" />
        <div className="flex min-h-0 flex-1">
          <LeftBar />
          <div className="flex w-[1210px] shrink-0 flex-col">
            <div className="relative h-[529px] shrink-0 overflow-hidden rounded-tr-[3px]">
              <Chart />
              <Legends />
            </div>
            <div className="flex h-[27px] shrink-0 items-center bg-[#131722] pl-[11px] text-[9px] text-[#d1d4dc]">
              <div className="flex w-[209px] justify-between whitespace-nowrap">
                {ranges.map((r) => <span key={r}>{r}</span>)}
              </div>
              <Sep className="ml-[10px]" />
              <svg className="ml-[11px]" width="13" height="12" viewBox="0 0 13 12" fill="none" stroke="currentColor"><path d="M1.5 5V2H11.5V10.5H7M1.5 4.5H11.5M0 8H6M4 6L6 8L4 10" /></svg>
              <span className="ml-auto">21:08:24 (UTC+3)</span>
              <Sep className="ml-[11px]" />
              <span className="ml-[8px] w-[19px]">%</span>
              <span className="w-[23px] text-[8.6px] font-semibold">лог</span>
              <span className="w-[27px] text-[8.6px] font-semibold tracking-[-0.2px]">авто</span>
            </div>
            <div className="h-[3px] shrink-0 bg-[#2a2e39]" />
            <div className="flex h-[25px] shrink-0 items-center whitespace-nowrap border-b border-[#1e222d] bg-[#131722] pl-[11px] text-[8.9px] text-[#d1d4dc]">
              <span className="w-[71px]">Скринер акций</span>
              <ChevronDown size={8} strokeWidth={2} />
              <span className="ml-[16px] w-[82px]">Редактор Pine</span>
              <span className="w-[98px]">Тестер стратегий</span>
              <span className="text-[#2f54c4]">Торговая панель</span>
              <div className="ml-auto mt-2 h-px w-[9px] bg-[#b2b5be]" />
              <Maximize size={13} strokeWidth={1.8} className="ml-[13px] mr-[8px] text-[#b2b5be]" />
            </div>
            {/* heading of the broker list, only its ascenders reach above the fold */}
            <div className="flex flex-1 items-end bg-[#131722] pl-[542px]">
              {[0, 1, 2, 3].map((k) => <i key={k} className={k === 2 ? 'mr-[32px] h-px w-[3px] bg-[#8a8d96]' : 'mr-[76px] h-px w-[4px] bg-[#8a8d96]'} />)}
            </div>
          </div>
          <RightBar />
        </div>
      </div>
    </div>
  );
}
